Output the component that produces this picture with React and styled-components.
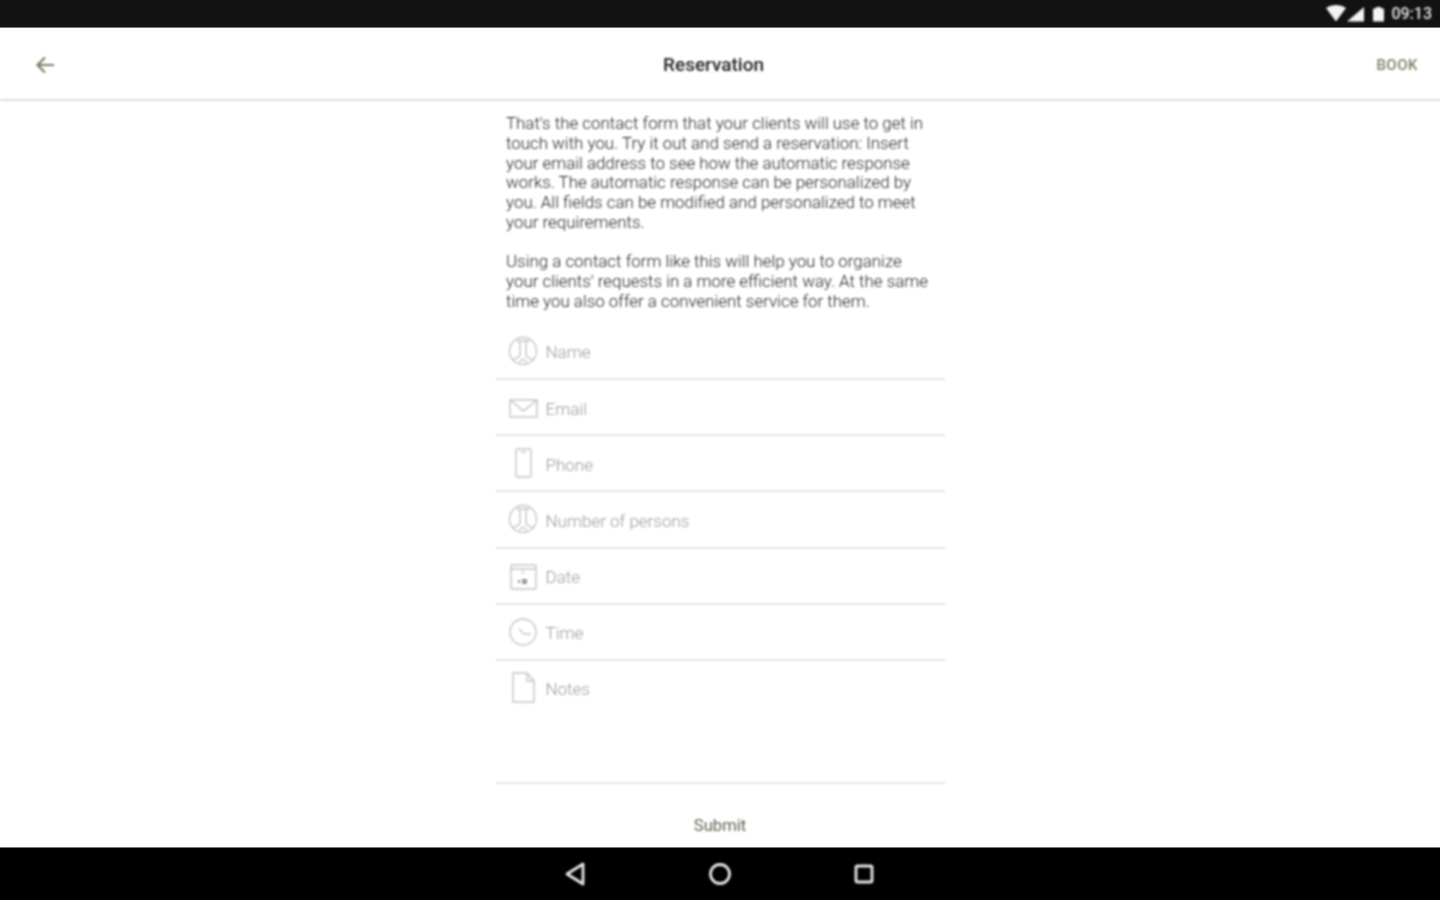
import styled, { createGlobalStyle, css } from 'styled-components';

const GlobalStyle = createGlobalStyle`
  html, body {
    margin: 0;
    padding: 0;
    background: #fff;
  }
  * {
    box-sizing: border-box;
  }
`;

// the reference is a soft, upscaled capture
const soft = css`
  filter: blur(0.8px);
`;

const Page = styled.div`
  width: 1440px;
  height: 900px;
  display: flex;
  flex-direction: column;
  overflow: hidden;
  font-family: Roboto, 'Liberation Sans', sans-serif;
`;

const StatusBar = styled.div`
  height: 28px;
  flex: none;
  background: #121212;
  border-bottom: 1px solid #777;
  display: flex;
  align-items: center;
  justify-content: flex-end;
  padding: 0 8px 0 0;
  color: #e4e4e4;
`;

const StatusIcons = styled.div`
  ${soft}
  display: flex;
  align-items: center;
  column-gap: 5px;
`;

const Clock = styled.span`
  font-size: 16px;
  font-weight: 500;
`;

const AppBar = styled.header`
  ${soft}
  height: 73px;
  flex: none;
  display: flex;
  align-items: center;
  justify-content: space-between;
  padding: 2px 22px 0 35px;
  border-bottom: 2px solid #dedede;
  position: relative;
`;

const Title = styled.h1`
  position: absolute;
  left: 663px;
  top: 26px;
  margin: 0;
  font-size: 19px;
  line-height: 22px;
  font-weight: 500;
  color: #222;
`;

const BookButton = styled.span`
  font-size: 15px;
  font-weight: 500;
  letter-spacing: 0.5px;
  color: #7a7a64;
`;

const Main = styled.main`
  ${soft}
  flex: 1;
  width: 449px;
  margin: 0 auto;
  display: flex;
  flex-direction: column;
  padding-top: 13px;
  min-height: 0;
`;

const Intro = styled.p`
  margin: 0 0 19.7px;
  padding: 0 8.5px 0 10.5px;
  font-size: 16.9px;
  font-weight: 300;
  line-height: 19.75px;
  color: #222;
`;

const Form = styled.div`
  display: flex;
  flex-direction: column;
  margin-top: -7.3px;
`;

const Row = styled.div`
  height: ${p => p.$height || 56.2}px;
  flex: none;
  display: flex;
  align-items: ${p => (p.$tall ? 'flex-start' : 'center')};
  border-bottom: 2px solid #e6e6e6;
  padding: ${p => (p.$tall ? '12px' : '2px')} 0 0 12px;
  column-gap: 8px;
`;

const FieldIcon = styled.svg`
  width: 30px;
  height: 32px;
  flex: none;
  margin-top: -2px;
  fill: none;
  stroke: #c4c4bf;
  stroke-width: 1.4;
`;

const Placeholder = styled.span`
  font-size: 17px;
  font-weight: 300;
  line-height: 20px;
  color: #999;
  margin-top: ${p => (p.$tall ? '6px' : '1px')};
`;

const SubmitRow = styled.div`
  text-align: center;
  padding-top: 32px;
  font-size: 16.6px;
  line-height: 20px;
  color: #5f5f50;
`;

const NavBar = styled.nav`
  height: 53px;
  flex: none;
  background: #000;
  border-top: 1px solid #777;
  display: flex;
  align-items: center;
  justify-content: center;
  column-gap: 114px;
`;

const NavIcon = styled.svg`
  ${soft}
  width: 30px;
  height: 30px;
  fill: none;
  stroke: #e8e8e8;
  stroke-width: 2.8;
`;

const PersonIcon = () => (
  <FieldIcon viewBox="0 0 30 32">
    <circle cx="15" cy="16" r="13.5" />
    <path d="M9 6h12M12 6v15l-7 4M18 6v15l7 4M11 27l4-3 4 3" />
  </FieldIcon>
);

const MailIcon = () => (
  <FieldIcon viewBox="0 0 30 32">
    <path d="M2 9h27v17H2zM2 9l13.500 11L29 9" />
  </FieldIcon>
);

const PhoneIcon = () => (
  <FieldIcon viewBox="0 0 30 32">
    <rect x="8" y="2" width="15" height="28" rx="2" />
    <path d="M13 5h5" />
  </FieldIcon>
);

const DateIcon = () => (
  <FieldIcon viewBox="0 0 30 32">
    <rect x="3" y="5" width="25" height="24" rx="1" />
    <path d="M3 9h25M15 11v3" />
    <path d="M11 20v3M15 20h3v3h-3z" stroke="#6f6f6a" />
  </FieldIcon>
);

const TimeIcon = () => (
  <FieldIcon viewBox="0 0 30 32">
    <circle cx="15" cy="16" r="13" />
    <path d="M11 13l5 5h7" />
  </FieldIcon>
);

const NoteIcon = () => (
  <FieldIcon viewBox="0 0 30 32">
    <path d="M5 2h14l7 8v21H5zM19 2v8h7" />
  </FieldIcon>
);

const fields = [
  { label: 'Name', Icon: PersonIcon },
  { label: 'Email', Icon: MailIcon },
  { label: 'Phone', Icon: PhoneIcon },
  { label: 'Number of persons', Icon: PersonIcon },
  { label: 'Date', Icon: DateIcon },
  { label: 'Time', Icon: TimeIcon },
];

const App = () => (
  <>
    <GlobalStyle />
    <Page>
      <StatusBar>
        <StatusIcons>
          <svg width="60" height="18" viewBox="0 0 60 18">
            <path d="M0 3C6 -1 14 -1 20 3L10 16.500z" fill="#f4f4f4" />
            <path d="M21 16.500L38 2v14.500z" fill="#f4f4f4" />
            <path d="M47 3.500h3V2h5v1.500h3v13H47z" fill="#f4f4f4" />
          </svg>
          <Clock>09:13</Clock>
        </StatusIcons>
      </StatusBar>
      <AppBar>
        <svg width="20" height="20" viewBox="0 0 20 20" fill="none" stroke="#7b7d62" strokeWidth="2.2">
          <path d="M19 10H3M10 2.500L2.500 10l7.500 7.500" />
        </svg>
        <Title>Reservation</Title>
        <BookButton>BOOK</BookButton>
      </AppBar>
      <Main>
        <Intro>
          That's the contact form that your clients will use to get in touch with you. Try it out and send a
          reservation: Insert your email address to see how the automatic response works. The automatic response
          can be personalized by you. All fields can be modified and personalized to meet your requirements.
        </Intro>
        <Intro>
          Using a contact form like this will help you to organize your clients' requests in a more efficient
          way. At the same time you also offer a convenient service for them.
        </Intro>
        <Form>
          {fields.map(({ label, Icon }) => (
            <Row key={label}>
              <Icon />
              <Placeholder>{label}</Placeholder>
            </Row>
          ))}
          <Row $tall $height={123}>
            <NoteIcon />
            <Placeholder $tall>Notes</Placeholder>
          </Row>
        </Form>
        <SubmitRow>Submit</SubmitRow>
      </Main>
      <NavBar>
        <NavIcon viewBox="0 0 30 30">
          <path d="M22 5v20L6 15z" strokeLinejoin="round" />
        </NavIcon>
        <NavIcon viewBox="0 0 30 30">
          <circle cx="15" cy="15" r="9.500" />
        </NavIcon>
        <NavIcon viewBox="0 0 30 30">
          <rect x="7" y="7" width="16" height="16" rx="1.500" />
        </NavIcon>
      </NavBar>
    </Page>
  </>
);

export default App;
